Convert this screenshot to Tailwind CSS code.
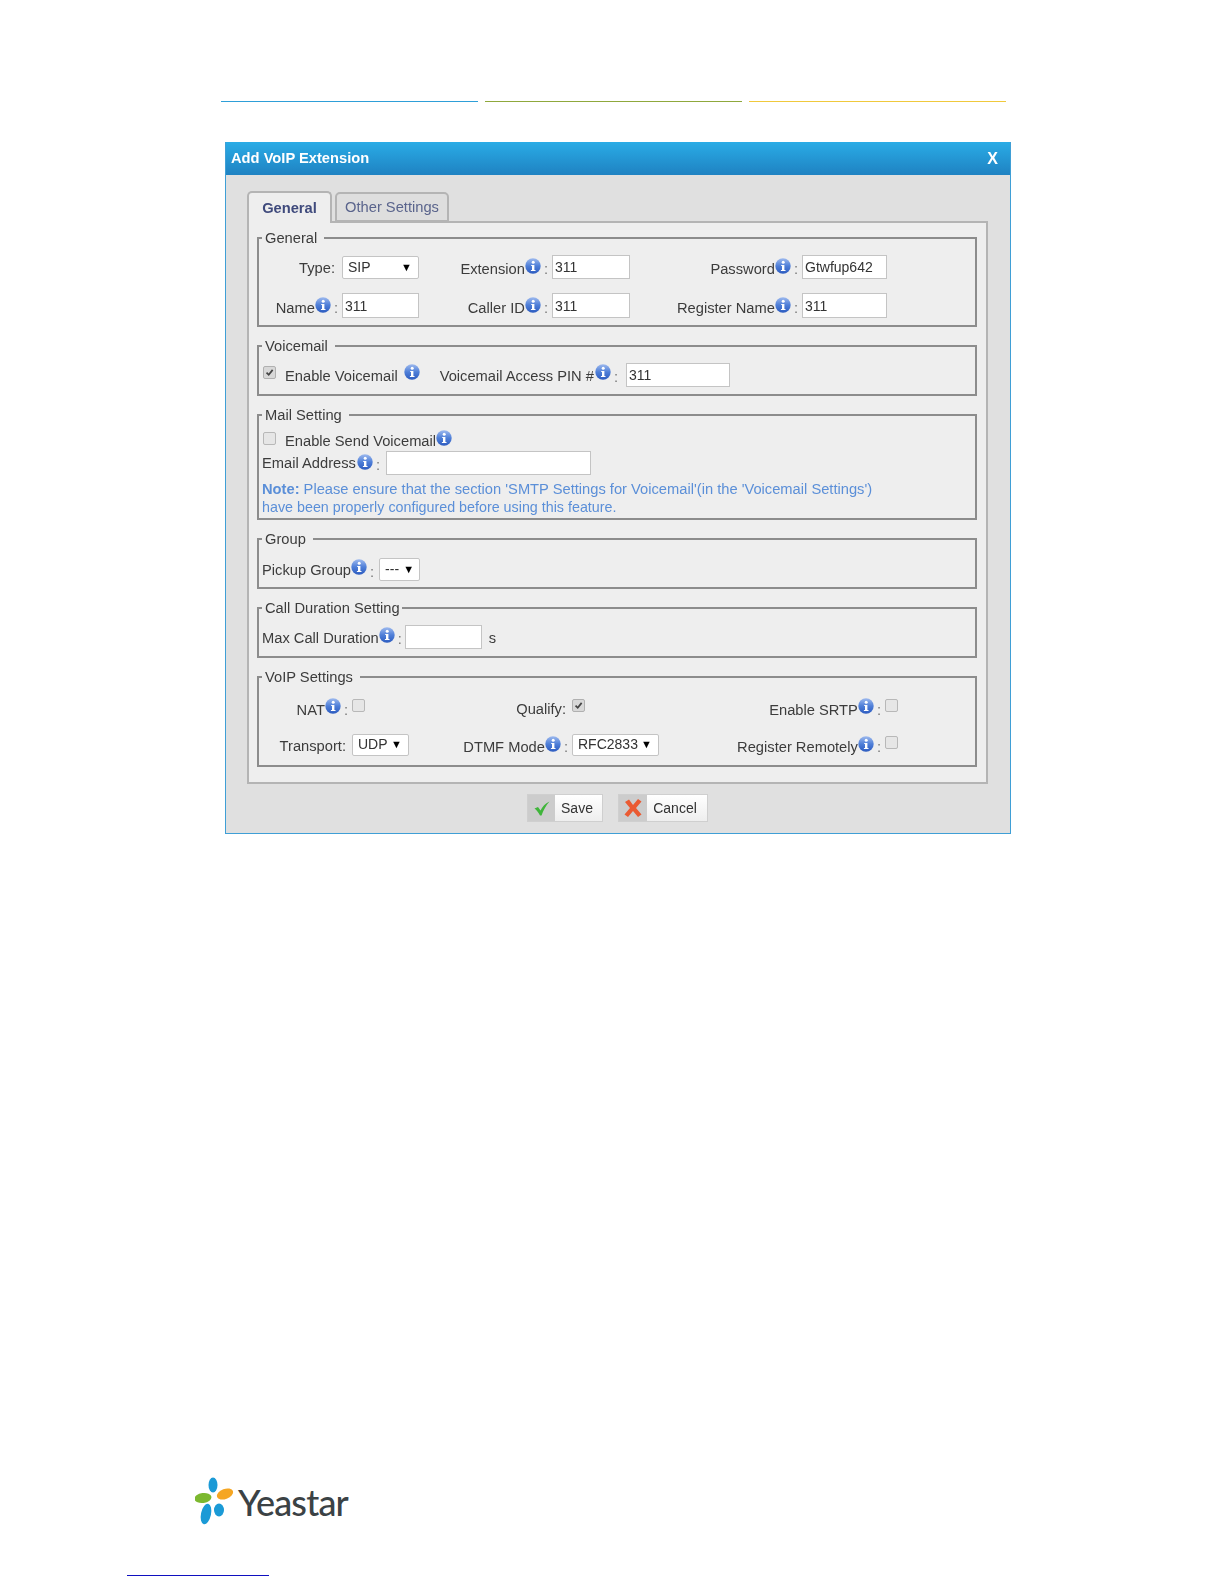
<!DOCTYPE html>
<html lang="en">

<head>
    <meta charset="UTF-8">
    <title>Add VoIP Extension</title>
    <script src="https://cdn.jsdelivr.net/npm/@tailwindcss/browser@4"></script>
</head>

<body class="bg-white font-['Liberation_Sans',Arial,sans-serif] text-[14.7px] text-[#3c3c3c] h-[1584px] overflow-hidden">

    <svg class="absolute w-0 h-0">
        <defs>
            <linearGradient id="infograd" x1="0" y1="0" x2="0" y2="1">
                <stop offset="0" stop-color="#9db9ee" />
                <stop offset="0.5" stop-color="#4f7fd8" />
                <stop offset="1" stop-color="#2d5cc0" />
            </linearGradient>
            <symbol id="info" viewBox="0 0 16 16">
                <circle cx="8" cy="8" r="7.7" fill="url(#infograd)" />
                <circle cx="8.200" cy="4.200" r="1.500" fill="#fff" />
                <path d="M6.200 6.900h3.200v5h1.100v1.200H5.900v-1.200h1.100V8.100h-.8z" fill="#fff" />
            </symbol>
            <symbol id="tick" viewBox="0 0 13 13">
                <path d="M3 6.600l2.600 2.600L10.200 3.400" fill="none" stroke="#444" stroke-width="2" />
            </symbol>
        </defs>
    </svg>

    <!-- header rules -->
    <div class="flex gap-[7px] pt-[101px] pl-[221px]">
        <div class="w-[257px] h-px bg-[#2e9fd8]"></div>
        <div class="w-[257px] h-px bg-[#8fa83c]"></div>
        <div class="w-[257px] h-px bg-[#f0c93c]"></div>
    </div>

    <!-- dialog -->
    <div class="w-[786px] ml-[225px] mt-[40px] border border-t-0 border-[#3f9fd6] bg-[#e0e0e0] blur-[0.3px]">
        <div class="flex justify-between items-center h-[33px] pl-[5px] pr-[12px] bg-gradient-to-b from-[#2aace6] to-[#1f82c2] text-white font-bold">
            <span>Add VoIP Extension</span>
            <span class="text-[16px]">X</span>
        </div>

        <div class="pt-[18px] px-[21px]">
            <div class="flex gap-[3px] h-[30px] items-end relative z-10 -mb-[2px]">
                <div class="w-[85px] h-[32px] flex items-center justify-center bg-[#eeeeee] border-2 border-b-0 border-[#b4b4b4] rounded-t-[5px] font-bold text-[#3f4a7c]">General</div>
                <div class="w-[114px] h-[30px] mb-[1px] flex items-center justify-center bg-[#dedede] border-2 border-[#b4b4b4] rounded-t-[5px] text-[#5a648c]">Other Settings</div>
            </div>

            <div class="w-[741px] border-2 border-[#b4b4b4] bg-[#eeeeee] pl-[8px] pr-[9px] pt-[5px] pb-[15px] flex flex-col gap-[9px]">

                <fieldset class="border-2 border-[#8c8c8c]">
                    <legend class="ml-[3px] pl-[3px] pr-[7px] h-[20px] leading-[20px]">General</legend>
                    <div class="flex items-center h-[24px] mt-[7px]">
                        <div class="w-[83px] flex justify-end pr-[7px]"><span class="pt-[3px]">Type:</span></div>
                        <div class="w-[77px] h-[23px] flex justify-between items-center pl-[5px] pr-[6px] bg-white border border-[#c4c4c4] rounded-[2px] text-[14px] text-[#333]"><span>SIP</span><span class="text-[11px] text-black">▼</span></div>
                        <div class="w-[133px] flex justify-end items-center pr-[4px]"><span class="pt-[5px]">Extension</span><svg class="w-[16px] h-[16px] mb-[2px]"><use href="#info" /></svg><span class="pt-[5px] pl-[3px] text-[#777]">:</span></div>
                        <input type="text" value="311" class="w-[78px] h-[24px] pl-[2px] bg-white border border-[#c4c4c4] text-[14px] text-[#333]">
                        <div class="w-[172px] flex justify-end items-center pr-[4px]"><span class="pt-[5px]">Password</span><svg class="w-[16px] h-[16px] mb-[2px]"><use href="#info" /></svg><span class="pt-[5px] pl-[3px] text-[#777]">:</span></div>
                        <input type="text" value="Gtwfup642" class="w-[85px] h-[24px] pl-[2px] bg-white border border-[#c4c4c4] text-[14px] text-[#333]">
                    </div>
                    <div class="flex items-center h-[25px] mt-[14px] mb-[7px]">
                        <div class="w-[83px] flex justify-end items-center pr-[4px]"><span class="pt-[5px]">Name</span><svg class="w-[16px] h-[16px] mb-[2px]"><use href="#info" /></svg><span class="pt-[5px] pl-[3px] text-[#777]">:</span></div>
                        <input type="text" value="311" class="w-[77px] h-[25px] pl-[2px] bg-white border border-[#c4c4c4] text-[14px] text-[#333]">
                        <div class="w-[133px] flex justify-end items-center pr-[4px]"><span class="pt-[5px]">Caller ID</span><svg class="w-[16px] h-[16px] mb-[2px]"><use href="#info" /></svg><span class="pt-[5px] pl-[3px] text-[#777]">:</span></div>
                        <input type="text" value="311" class="w-[78px] h-[25px] pl-[2px] bg-white border border-[#c4c4c4] text-[14px] text-[#333]">
                        <div class="w-[172px] flex justify-end items-center pr-[4px]"><span class="pt-[5px]">Register Name</span><svg class="w-[16px] h-[16px] mb-[2px]"><use href="#info" /></svg><span class="pt-[5px] pl-[3px] text-[#777]">:</span></div>
                        <input type="text" value="311" class="w-[85px] h-[25px] pl-[2px] bg-white border border-[#c4c4c4] text-[14px] text-[#333]">
                    </div>
                </fieldset>

                <fieldset class="border-2 border-[#8c8c8c]">
                    <legend class="ml-[3px] pl-[3px] pr-[7px] h-[20px] leading-[20px]">Voicemail</legend>
                    <div class="flex items-center h-[24px] mt-[7px] mb-[7px] pl-[4px]">
                        <span class="w-[13px] h-[13px] mb-[6px] bg-[#d8d8d8] border border-[#b0b0b0] rounded-[2px]"><svg class="w-[11px] h-[11px]"><use href="#tick" /></svg></span>
                        <span class="ml-[9px] pt-[2px]">Enable Voicemail</span>
                        <svg class="w-[16px] h-[16px] ml-[6px] mb-[6px]"><use href="#info" /></svg>
                        <span class="ml-[20px] pt-[2px]">Voicemail Access PIN #</span>
                        <svg class="w-[16px] h-[16px] ml-px mb-[6px]"><use href="#info" /></svg>
                        <span class="pt-[4px] pl-[3px] pr-[8px] text-[#777]">:</span>
                        <input type="text" value="311" class="w-[104px] h-[24px] pl-[2px] bg-white border border-[#c4c4c4] text-[14px] text-[#333]">
                    </div>
                </fieldset>

                <fieldset class="border-2 border-[#8c8c8c]">
                    <legend class="ml-[3px] pl-[3px] pr-[7px] h-[20px] leading-[20px]">Mail Setting</legend>
                    <div class="flex items-center h-[18px] mt-[5px] pl-[4px]">
                        <span class="w-[13px] h-[13px] mb-[2px] bg-[#e6e6e6] border border-[#b8b8b8] rounded-[2px]"></span>
                        <span class="ml-[9px] pt-[4px]">Enable Send Voicemail</span>
                        <svg class="w-[16px] h-[16px] mb-[3px]"><use href="#info" /></svg>
                    </div>
                    <div class="flex items-center h-[24px] mt-[3px] pl-[3px]">
                        <span>Email Address</span>
                        <svg class="w-[16px] h-[16px] ml-px mb-[3px]"><use href="#info" /></svg>
                        <span class="pt-[5px] pl-[3px] pr-[6px] text-[#777]">:</span>
                        <input type="text" class="w-[205px] h-[24px] bg-white border border-[#c4c4c4]">
                    </div>
                    <p class="mt-[5px] pl-[3px] mb-[2px] leading-[18px] text-[14.3px] text-[#5b8fd8]"><span class="text-[14.7px]"><b>Note:</b> Please ensure that the section 'SMTP Settings for Voicemail'(in the 'Voicemail Settings')</span><br>have been properly configured before using this feature.</p>
                </fieldset>

                <fieldset class="border-2 border-[#8c8c8c]">
                    <legend class="ml-[3px] pl-[3px] pr-[7px] h-[20px] leading-[20px]">Group</legend>
                    <div class="flex items-center h-[23px] mt-[9px] mb-[6px] pl-[3px]">
                        <span class="pt-[2px]">Pickup Group</span>
                        <svg class="w-[16px] h-[16px] mb-[5px]"><use href="#info" /></svg>
                        <span class="pt-[5px] pl-[3px] pr-[5px] text-[#777]">:</span>
                        <div class="w-[41px] h-[23px] flex justify-between items-center pl-[5px] pr-[5px] bg-white border border-[#c4c4c4] rounded-[2px] text-[14px] text-[#333]"><span>---</span><span class="text-[11px] text-black">▼</span></div>
                    </div>
                </fieldset>

                <fieldset class="border-2 border-[#8c8c8c]">
                    <legend class="ml-[3px] pl-[3px] pr-[2px] h-[20px] leading-[20px]">Call Duration Setting</legend>
                    <div class="flex items-center h-[24px] mt-[7px] mb-[7px] pl-[3px]">
                        <span class="pt-[2px]">Max Call Duration</span>
                        <svg class="w-[16px] h-[16px] mb-[5px]"><use href="#info" /></svg>
                        <span class="pt-[5px] pl-[3px] pr-[3px] text-[#777]">:</span>
                        <input type="text" class="w-[77px] h-[24px] bg-white border border-[#c4c4c4]">
                        <span class="ml-[7px] pt-[2px]">s</span>
                    </div>
                </fieldset>

                <fieldset class="border-2 border-[#8c8c8c]">
                    <legend class="ml-[3px] pl-[3px] pr-[7px] h-[20px] leading-[20px]">VoIP Settings</legend>
                    <div class="flex items-center h-[24px] mt-[6px]">
                        <div class="w-[93px] flex justify-end items-center pr-[4px]"><span class="pt-[10px]">NAT</span><svg class="w-[16px] h-[16px] mt-[2px]"><use href="#info" /></svg><span class="pt-[10px] pl-[3px] text-[#777]">:</span></div>
                        <span class="w-[13px] h-[13px] bg-[#e6e6e6] border border-[#b8b8b8] rounded-[2px]"></span>
                        <div class="w-[207px] flex justify-end pr-[6px]"><span class="pt-[9px]">Qualify:</span></div>
                        <span class="w-[13px] h-[13px] bg-[#d8d8d8] border border-[#b0b0b0] rounded-[2px]"><svg class="w-[11px] h-[11px]"><use href="#tick" /></svg></span>
                        <div class="w-[300px] flex justify-end items-center pr-[4px]"><span class="pt-[10px]">Enable SRTP</span><svg class="w-[16px] h-[16px] mt-[2px]"><use href="#info" /></svg><span class="pt-[10px] pl-[3px] text-[#777]">:</span></div>
                        <span class="w-[13px] h-[13px] bg-[#e6e6e6] border border-[#b8b8b8] rounded-[2px]"></span>
                    </div>
                    <div class="flex items-center h-[23px] mt-[16px] mb-[9px]">
                        <div class="w-[93px] flex justify-end pr-[6px]"><span class="pt-[3px]">Transport:</span></div>
                        <div class="w-[57px] h-[22px] flex justify-between items-center pl-[5px] pr-[6px] bg-white border border-[#c4c4c4] rounded-[2px] text-[14px] text-[#333]"><span>UDP</span><span class="text-[11px] text-black">▼</span></div>
                        <div class="w-[163px] flex justify-end items-center pr-[4px]"><span class="pt-[6px]">DTMF Mode</span><svg class="w-[16px] h-[16px] mb-[2px]"><use href="#info" /></svg><span class="pt-[6px] pl-[3px] text-[#777]">:</span></div>
                        <div class="w-[87px] h-[22px] flex justify-between items-center pl-[5px] pr-[6px] bg-white border border-[#c4c4c4] rounded-[2px] text-[14px] text-[#333]"><span>RFC2833</span><span class="text-[11px] text-black">▼</span></div>
                        <div class="w-[226px] flex justify-end items-center pr-[4px]"><span class="pt-[6px]">Register Remotely</span><svg class="w-[16px] h-[16px] mb-[2px]"><use href="#info" /></svg><span class="pt-[6px] pl-[3px] text-[#777]">:</span></div>
                        <span class="w-[13px] h-[13px] mb-[5px] bg-[#e6e6e6] border border-[#b8b8b8] rounded-[2px]"></span>
                    </div>
                </fieldset>
            </div>

            <div class="flex justify-center gap-[15px] pt-[10px] pb-[11px] pr-[1px]">
                <button class="flex w-[76px] h-[28px] bg-gradient-to-b from-white to-[#eeeeee] border border-[#cfcfcf] text-[14px] text-[#333]">
                    <span class="w-[27px] h-full flex items-center justify-center bg-[#cccccc]">
                        <svg class="w-[18px] h-[18px]" viewBox="0 0 18 18"><path d="M1.500 9.500L5 8l2.500 3.500C9.500 7.500 12 4.500 16.500 2.500 13 6.500 10.500 11 8.500 16.500H7C5.500 13.500 4 11.500 1.500 9.500z" fill="#3fb53a" /></svg>
                    </span>
                    <span class="flex-1 leading-[26px] text-center pr-[3px]">Save</span>
                </button>
                <button class="flex w-[90px] h-[28px] bg-gradient-to-b from-white to-[#eeeeee] border border-[#cfcfcf] text-[14px] text-[#333]">
                    <span class="w-[28px] h-full flex items-center justify-center bg-[#cccccc]">
                        <svg class="w-[20px] h-[20px]" viewBox="0 0 20 20"><path d="M2 4l4-2.500 4 5.500 5-6 3.500 2.500-5.500 6.500 5.500 6.500-3.500 2.500-5-6-5 6-3.500-2.500 5.500-6.500z" fill="#ea5a32" /></svg>
                    </span>
                    <span class="flex-1 leading-[26px] text-center pr-[4px]">Cancel</span>
                </button>
            </div>
        </div>
    </div>

    <!-- footer logo -->
    <div class="flex items-center ml-[195px] mt-[643px] h-[50px]">
        <svg class="w-[40px] h-[50px]" viewBox="0 0 40 50">
            <ellipse cx="18" cy="8" rx="4.500" ry="7.500" fill="#1b9ad6" />
            <ellipse cx="30" cy="17" rx="8.500" ry="5" fill="#f5a623" transform="rotate(-20 30 17)" />
            <ellipse cx="8" cy="21" rx="8.500" ry="5" fill="#7cb82f" transform="rotate(-8 8 21)" />
            <ellipse cx="24" cy="33" rx="5" ry="6.500" fill="#1b9ad6" />
            <ellipse cx="11" cy="37" rx="5" ry="10.500" fill="#1b9ad6" transform="rotate(12 11 37)" />
        </svg>
        <span class="ml-[3px] font-['Lato',sans-serif] font-medium text-[36px] tracking-[-0.8px] text-[#3b4245] leading-none">Yeastar</span>
    </div>
    <div class="w-[142px] h-[1px] ml-[127px] mt-[48px] bg-[#1010c0]"></div>

</body>

</html>
